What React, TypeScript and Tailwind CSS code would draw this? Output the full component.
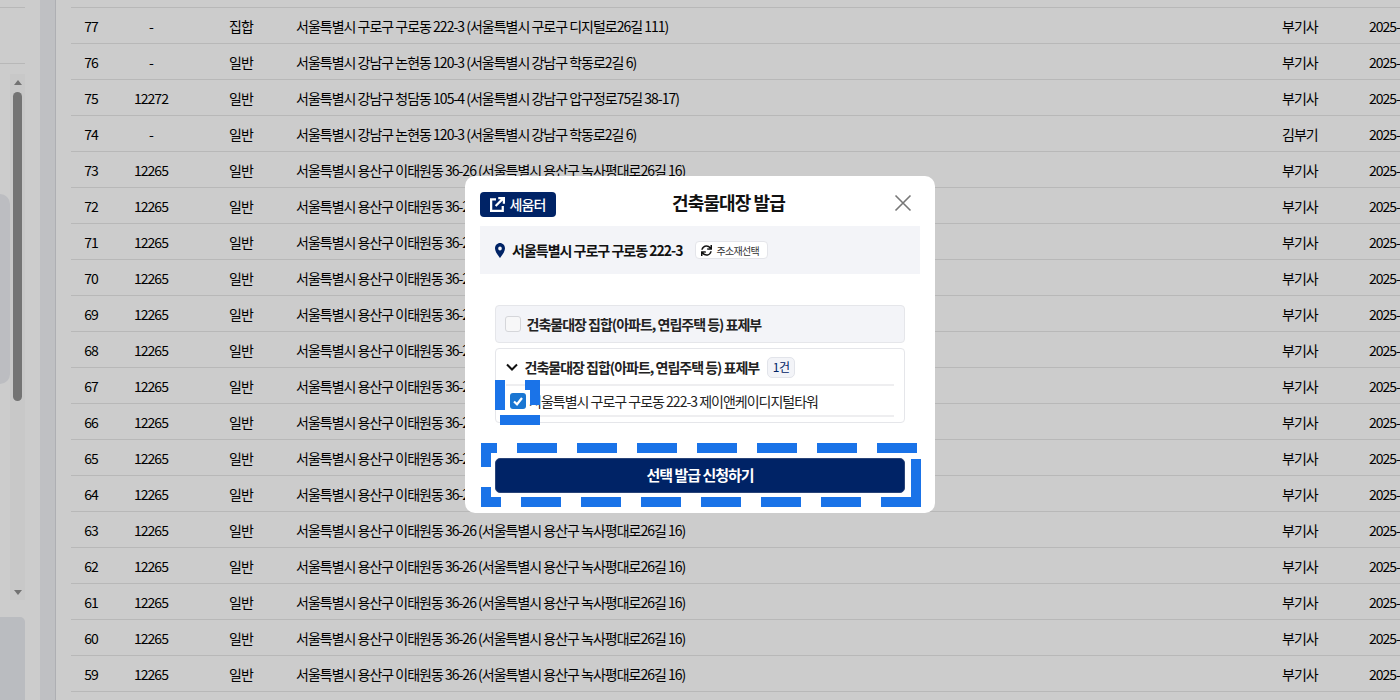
import { FaSync } from "react-icons/fa";

const font = "font-['Noto_Sans_CJK_KR','Noto_Sans',sans-serif]";

const rows = [
  ["77", "-", "집합", "서울특별시 구로구 구로동 222-3 (서울특별시 구로구 디지털로26길 111)", "부기사"],
  ["76", "-", "일반", "서울특별시 강남구 논현동 120-3 (서울특별시 강남구 학동로2길 6)", "부기사"],
  ["75", "12272", "일반", "서울특별시 강남구 청담동 105-4 (서울특별시 강남구 압구정로75길 38-17)", "부기사"],
  ["74", "-", "일반", "서울특별시 강남구 논현동 120-3 (서울특별시 강남구 학동로2길 6)", "김부기"],
  ...["73", "72", "71", "70", "69", "68", "67", "66", "65", "64", "63", "62", "61", "60", "59"].map((no) => [
    no,
    "12265",
    "일반",
    "서울특별시 용산구 이태원동 36-26 (서울특별시 용산구 녹사평대로26길 16)",
    "부기사",
  ]),
];

// marching-ants highlight, each side has its own dash phase
const bigDashes = [
  [0, 0, 16, 10],
  [36, 0, 40, 10],
  [96, 0, 40, 10],
  [156, 0, 40, 10],
  [216, 0, 40, 10],
  [276, 0, 40, 10],
  [336, 0, 40, 10],
  [396, 0, 40, 10],
  [430, 16, 10, 48],
  [0, 54, 20, 10],
  [40, 54, 40, 10],
  [100, 54, 40, 10],
  [160, 54, 40, 10],
  [220, 54, 40, 10],
  [280, 54, 40, 10],
  [340, 54, 40, 10],
  [400, 54, 40, 10],
  [0, 0, 10, 24],
  [0, 44, 10, 20],
];

const smallDashes = [
  [0, 0, 10, 30],
  [30, 0, 15, 10],
  [35, 0, 10, 25],
  [5, 35, 40, 10],
];

function Dashes({ rects, width, height, className }: { rects: number[][]; width: number; height: number; className: string }) {
  return (
    <svg width={width} height={height} className={className}>
      {rects.map(([x, y, w, h], i) => (
        <rect key={i} x={x} y={y} width={w} height={h} fill="#1a73e8" />
      ))}
    </svg>
  );
}

function Sidebar() {
  return (
    <div className="flex h-full w-[56px] shrink-0">
      <div className="w-[40px] pt-[7px]">
        <div className="h-[57px] w-[25px] border-y border-[#e6e6e6]" />
        <div className="relative mt-[10px] flex h-[526px] w-[25px] justify-end">
          <div className="absolute left-0 top-[120px] h-[190px] w-[10px] rounded-r-[10px] bg-[#ebedf2]" />
          <div className="relative flex h-full w-[15px] flex-col items-center bg-[#fbfbfb]">
            <div className="mt-[6px] h-0 w-0 border-x-[4.5px] border-b-[5px] border-x-transparent border-b-[#8f8f8f]" />
            <div className="mt-[7px] h-[309px] w-[9px] rounded-full bg-[#909090]" />
            <div className="mt-auto mb-[5px] h-0 w-0 border-x-[4.5px] border-t-[5px] border-x-transparent border-t-[#8f8f8f]" />
          </div>
        </div>
        <div className="mt-[17px] h-[83px] w-[25px] rounded-tr-[5px] bg-[#e9ebf0]" />
      </div>
      <div className="w-[16px] border-r border-[#dadbe0] bg-[#eff0f4]" />
    </div>
  );
}

function Modal() {
  return (
    <div className="absolute left-[465px] top-[176px] h-[337px] w-[470px] rounded-[10px] bg-white px-[15px]">
      <div className="flex h-[50px] items-center justify-between">
        <a className="mt-[7px] flex h-[25px] w-[76px] items-center justify-center gap-[4px] rounded-[4px] bg-[#002366] text-[14px] font-medium tracking-[-0.8px] text-white">
          <svg width="15" height="15" viewBox="3 2 20 20" fill="none" stroke="white" strokeWidth="3">
            <path d="M11 5H4.500v15.500h15.500V14" />
            <path d="M14 3.500h7.500V11M21 3.500 10.500 14" />
          </svg>
          세움터
        </a>
        <h2 className="ml-[8px] mt-[2px] text-[18px] font-bold leading-none tracking-[-0.9px] text-[#111]">건축물대장 발급</h2>
        <button aria-label="close" className="mr-[7px] mt-[4px] flex size-[20px] items-center justify-center">
          <svg width="20" height="20" viewBox="0 0 20 20" fill="none" stroke="#777" strokeWidth="1.6">
            <path d="M2.500 2.500 17.500 17.500M17.500 2.500 2.500 17.500" />
          </svg>
        </button>
      </div>

      <div className="flex h-[48px] items-center bg-[#f3f4f8] pl-[15px]">
        <svg width="10" height="15" viewBox="0 0 11 15" fill="#002366" preserveAspectRatio="none">
          <path fillRule="evenodd" d="M5.500 0C2.500 0 0 2.400 0 5.400 0 9 5.500 15 5.500 15S11 9 11 5.400C11 2.400 8.500 0 5.500 0Zm0 7.400a2 2 0 1 1 0-4 2 2 0 0 1 0 4Z" />
        </svg>
        <span className="ml-[7px] text-[14px] font-bold tracking-[-1px] text-[#111]">서울특별시 구로구 구로동 222-3</span>
        <button className="ml-[13px] flex h-[18px] w-[73px] items-center gap-[4px] rounded-[4px] border border-[#e4e5ea] bg-white pl-[5px] text-[10px] tracking-[-0.7px] text-[#333]">
          <FaSync className="size-[11px] text-[#111]" />
          주소재선택
        </button>
      </div>

      <div className="mx-[15px] mt-[31px] flex h-[38px] items-center rounded-[4px] border border-[#e5e6ea] bg-[#f3f4f8] pl-[9px]">
        <span className="size-[16px] rounded-[3px] border border-[#d5d6da] bg-[#f7f7f8]" />
        <span className="ml-[5.5px] text-[14px] font-bold tracking-[-1px] text-[#222]">건축물대장 집합(아파트, 연립주택 등) 표제부</span>
      </div>

      <div className="mx-[15px] mt-[5px] h-[75px] rounded-[4px] border border-[#e5e6ea] bg-white px-[10px]">
        <div className="flex h-[37px] items-center border-b-2 border-[#eeeef0] pt-[1px]">
          <svg width="12" height="8" viewBox="0 0 12 8" fill="none" stroke="#111" strokeWidth="2">
            <path d="M1 1.500 6 6.500 11 1.500" />
          </svg>
          <span className="ml-[6.5px] text-[14px] font-bold tracking-[-1px] text-[#222]">건축물대장 집합(아파트, 연립주택 등) 표제부</span>
          <span className="ml-[8px] flex h-[21px] w-[28px] items-center justify-center rounded-[5px] border border-[#e2e4ea] bg-[#f3f4f8] text-[12px] tracking-[-0.5px] text-[#002366]">1건</span>
        </div>
        <div className="flex h-[31px] items-center border-b-2 border-[#eeeef0] pl-[4px]">
          <span className="flex size-[16px] items-center justify-center rounded-[3px] bg-[#1a76d2]">
            <svg width="12" height="12" viewBox="0 0 12 12" fill="none" stroke="white" strokeWidth="2.2">
              <path d="M2 6.500 5 9.300 10 3" />
            </svg>
          </span>
          <span className="ml-[3px] pt-[1px] text-[14px] tracking-[-1px] text-[#222]">서울특별시 구로구 구로동 222-3 제이앤케이디지털타워</span>
        </div>
      </div>

      <button className="mx-[15px] mt-[35px] h-[35px] w-[410px] rounded-[5px] border border-[#2a4478] bg-[#002366] text-[15px] font-bold tracking-[-1px] text-white">
        선택 발급 신청하기
      </button>

      <Dashes rects={smallDashes} width={45} height={45} className="absolute left-[30px] top-[204px]" />
      <Dashes rects={bigDashes} width={440} height={64} className="absolute left-[16px] top-[267px]" />
    </div>
  );
}

export default function App() {
  return (
    <div className={`relative flex h-[700px] w-[1400px] overflow-hidden bg-white text-[14px] text-black ${font}`}>
      <Sidebar />
      <div className="min-w-0 flex-1 overflow-hidden pl-[15px] pt-[7px]">
        <div className="w-[1400px] border-t border-[#e6e6e6]">
          {rows.map(([no, zip, type, address, owner]) => (
            <div
              key={no}
              className="grid h-[36px] grid-cols-[40px_80px_100px_986px_88px_100px] items-center border-b border-[#e6e6e6] pt-[2px] tracking-[-1px]"
            >
              <div className="text-center">{no}</div>
              <div className="text-center">{zip}</div>
              <div className="text-center">{type}</div>
              <div className="pl-[5px]">{address}</div>
              <div className="pl-[5px]">{owner}</div>
              <div className="pl-[4px]">2025-08-12</div>
            </div>
          ))}
        </div>
      </div>
      <div className="absolute inset-0 bg-black/20" />
      <Modal />
    </div>
  );
}
